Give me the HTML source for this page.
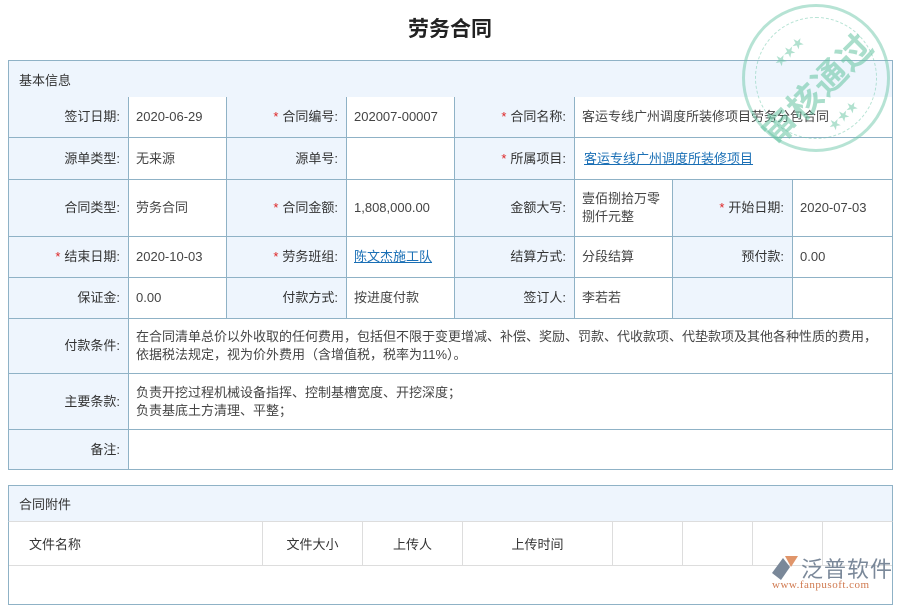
<!DOCTYPE html>
<html><head><meta charset="utf-8"><style>
*{margin:0;padding:0;box-sizing:border-box}
body{width:900px;height:600px;overflow:hidden;background:#fff;font-family:"Liberation Sans","Noto Sans CJK SC",sans-serif;font-size:13px;color:#333;position:relative}
.t{position:absolute;left:0;top:13px;width:900px;text-align:center;font-size:21px;font-weight:bold;color:#222}
.c{position:absolute;border-right:1px solid #8fb2c6;border-bottom:1px solid #8fb2c6;display:flex;align-items:center;padding:0 7px;line-height:18px}
.l{background:#eef5fd;justify-content:flex-end;padding-right:8px;color:#333}
.v{background:#fff;color:#444}
.s{color:#d22;margin-right:4px}
a{color:#1a6fb5;text-decoration:underline}
.h{position:absolute;background:#eef5fd;border:1px solid #8fb2c6;display:flex;align-items:center;padding-left:10px}
.g{position:absolute;top:521px;height:45px;border-right:1px solid #ddd;border-bottom:1px solid #ddd;display:flex;align-items:center;justify-content:center;color:#333}
.fl{border-left:1px solid #8fb2c6}
</style></head><body>
<div class="t">劳务合同</div>
<div class="h" style="left:8px;top:60px;width:885px;height:38px">基本信息</div>
<!-- row1 -->
<div class="c l fl" style="left:8px;top:97px;width:121px;height:41px">签订日期:</div>
<div class="c v" style="left:129px;top:97px;width:98px;height:41px">2020-06-29</div>
<div class="c l" style="left:227px;top:97px;width:120px;height:41px"><span class="s">*</span>合同编号:</div>
<div class="c v" style="left:347px;top:97px;width:108px;height:41px">202007-00007</div>
<div class="c l" style="left:455px;top:97px;width:120px;height:41px"><span class="s">*</span>合同名称:</div>
<div class="c v" style="left:575px;top:97px;width:318px;height:41px">客运专线广州调度所装修项目劳务分包合同</div>
<!-- row2 -->
<div class="c l fl" style="left:8px;top:138px;width:121px;height:42px">源单类型:</div>
<div class="c v" style="left:129px;top:138px;width:98px;height:42px">无来源</div>
<div class="c l" style="left:227px;top:138px;width:120px;height:42px">源单号:</div>
<div class="c v" style="left:347px;top:138px;width:108px;height:42px"></div>
<div class="c l" style="left:455px;top:138px;width:120px;height:42px"><span class="s">*</span>所属项目:</div>
<div class="c v" style="left:575px;top:138px;width:318px;height:42px;padding-left:9px"><a>客运专线广州调度所装修项目</a></div>
<!-- row3 -->
<div class="c l fl" style="left:8px;top:180px;width:121px;height:57px">合同类型:</div>
<div class="c v" style="left:129px;top:180px;width:98px;height:57px">劳务合同</div>
<div class="c l" style="left:227px;top:180px;width:120px;height:57px"><span class="s">*</span>合同金额:</div>
<div class="c v" style="left:347px;top:180px;width:108px;height:57px">1,808,000.00</div>
<div class="c l" style="left:455px;top:180px;width:120px;height:57px">金额大写:</div>
<div class="c v" style="left:575px;top:180px;width:98px;height:57px">壹佰捌拾万零捌仟元整</div>
<div class="c l" style="left:673px;top:180px;width:120px;height:57px"><span class="s">*</span>开始日期:</div>
<div class="c v" style="left:793px;top:180px;width:100px;height:57px">2020-07-03</div>
<!-- row4 -->
<div class="c l fl" style="left:8px;top:237px;width:121px;height:41px"><span class="s">*</span>结束日期:</div>
<div class="c v" style="left:129px;top:237px;width:98px;height:41px">2020-10-03</div>
<div class="c l" style="left:227px;top:237px;width:120px;height:41px"><span class="s">*</span>劳务班组:</div>
<div class="c v" style="left:347px;top:237px;width:108px;height:41px"><a>陈文杰施工队</a></div>
<div class="c l" style="left:455px;top:237px;width:120px;height:41px">结算方式:</div>
<div class="c v" style="left:575px;top:237px;width:98px;height:41px">分段结算</div>
<div class="c l" style="left:673px;top:237px;width:120px;height:41px">预付款:</div>
<div class="c v" style="left:793px;top:237px;width:100px;height:41px">0.00</div>
<!-- row5 -->
<div class="c l fl" style="left:8px;top:278px;width:121px;height:41px">保证金:</div>
<div class="c v" style="left:129px;top:278px;width:98px;height:41px">0.00</div>
<div class="c l" style="left:227px;top:278px;width:120px;height:41px">付款方式:</div>
<div class="c v" style="left:347px;top:278px;width:108px;height:41px">按进度付款</div>
<div class="c l" style="left:455px;top:278px;width:120px;height:41px">签订人:</div>
<div class="c v" style="left:575px;top:278px;width:98px;height:41px">李若若</div>
<div class="c l" style="left:673px;top:278px;width:120px;height:41px"></div>
<div class="c v" style="left:793px;top:278px;width:100px;height:41px"></div>
<!-- row6-8 -->
<div class="c l fl" style="left:8px;top:319px;width:121px;height:55px">付款条件:</div>
<div class="c v" style="left:129px;top:319px;width:764px;height:55px">在合同清单总价以外收取的任何费用，包括但不限于变更增减、补偿、奖励、罚款、代收款项、代垫款项及其他各种性质的费用，依据税法规定，视为价外费用（含增值税，税率为11%）。</div>
<div class="c l fl" style="left:8px;top:374px;width:121px;height:56px">主要条款:</div>
<div class="c v" style="left:129px;top:374px;width:764px;height:56px">负责开挖过程机械设备指挥、控制基槽宽度、开挖深度；<br>负责基底土方清理、平整；</div>
<div class="c l fl" style="left:8px;top:430px;width:121px;height:40px">备注:</div>
<div class="c v" style="left:129px;top:430px;width:764px;height:40px"></div>
<!-- attachments -->
<div style="position:absolute;left:8px;top:485px;width:885px;height:120px;border:1px solid #8fb2c6"></div>
<div class="h" style="left:8px;top:485px;width:885px;height:37px;border-bottom:1px solid #ddd">合同附件</div>
<div class="g" style="left:9px;width:254px;justify-content:flex-start;padding-left:20px">文件名称</div>
<div class="g" style="left:263px;width:100px">文件大小</div>
<div class="g" style="left:363px;width:100px">上传人</div>
<div class="g" style="left:463px;width:150px">上传时间</div>
<div class="g" style="left:613px;width:70px"></div>
<div class="g" style="left:683px;width:70px"></div>
<div class="g" style="left:753px;width:70px"></div>
<div class="g" style="left:823px;width:69px;border-right:none"></div>
<!-- logo -->
<div style="position:absolute;left:770px;top:553px;width:130px;height:40px">
<svg width="30" height="28" style="position:absolute;left:0;top:1px"><path d="M15 2 L28 2 L21 13 Z" fill="#e0956a"/><path d="M13 4 L2 19 L11 26 L20 13 Z" fill="#7a8899"/></svg>
<div style="position:absolute;left:31px;top:-1px;font-size:22px;color:#7a8899;letter-spacing:1px">泛普软件</div>
<div style="position:absolute;left:2px;top:26px;font-size:11px;color:#d07a50;font-family:'Liberation Serif',serif;letter-spacing:0.5px">www.fanpusoft.com</div>
</div>
<!-- stamp -->
<div style="position:absolute;left:742px;top:4px;width:148px;height:148px;border:3px solid rgba(110,200,170,0.5);border-radius:50%">
<div style="position:absolute;left:10px;top:10px;width:122px;height:122px;border:1px dashed rgba(110,200,170,0.5);border-radius:50%"></div>
<div style="position:absolute;left:-4px;top:56px;width:150px;text-align:center;transform:rotate(-45deg);font-size:34px;font-weight:bold;color:rgba(100,195,160,0.55);letter-spacing:1px">审核通过</div>
<div style="position:absolute;left:26px;top:36px;color:rgba(100,195,160,0.5);font-size:12px;transform:rotate(-45deg)">★★★</div>
<div style="position:absolute;left:80px;top:100px;color:rgba(100,195,160,0.5);font-size:12px;transform:rotate(-45deg)">★★★</div>
</div>
</body></html>
